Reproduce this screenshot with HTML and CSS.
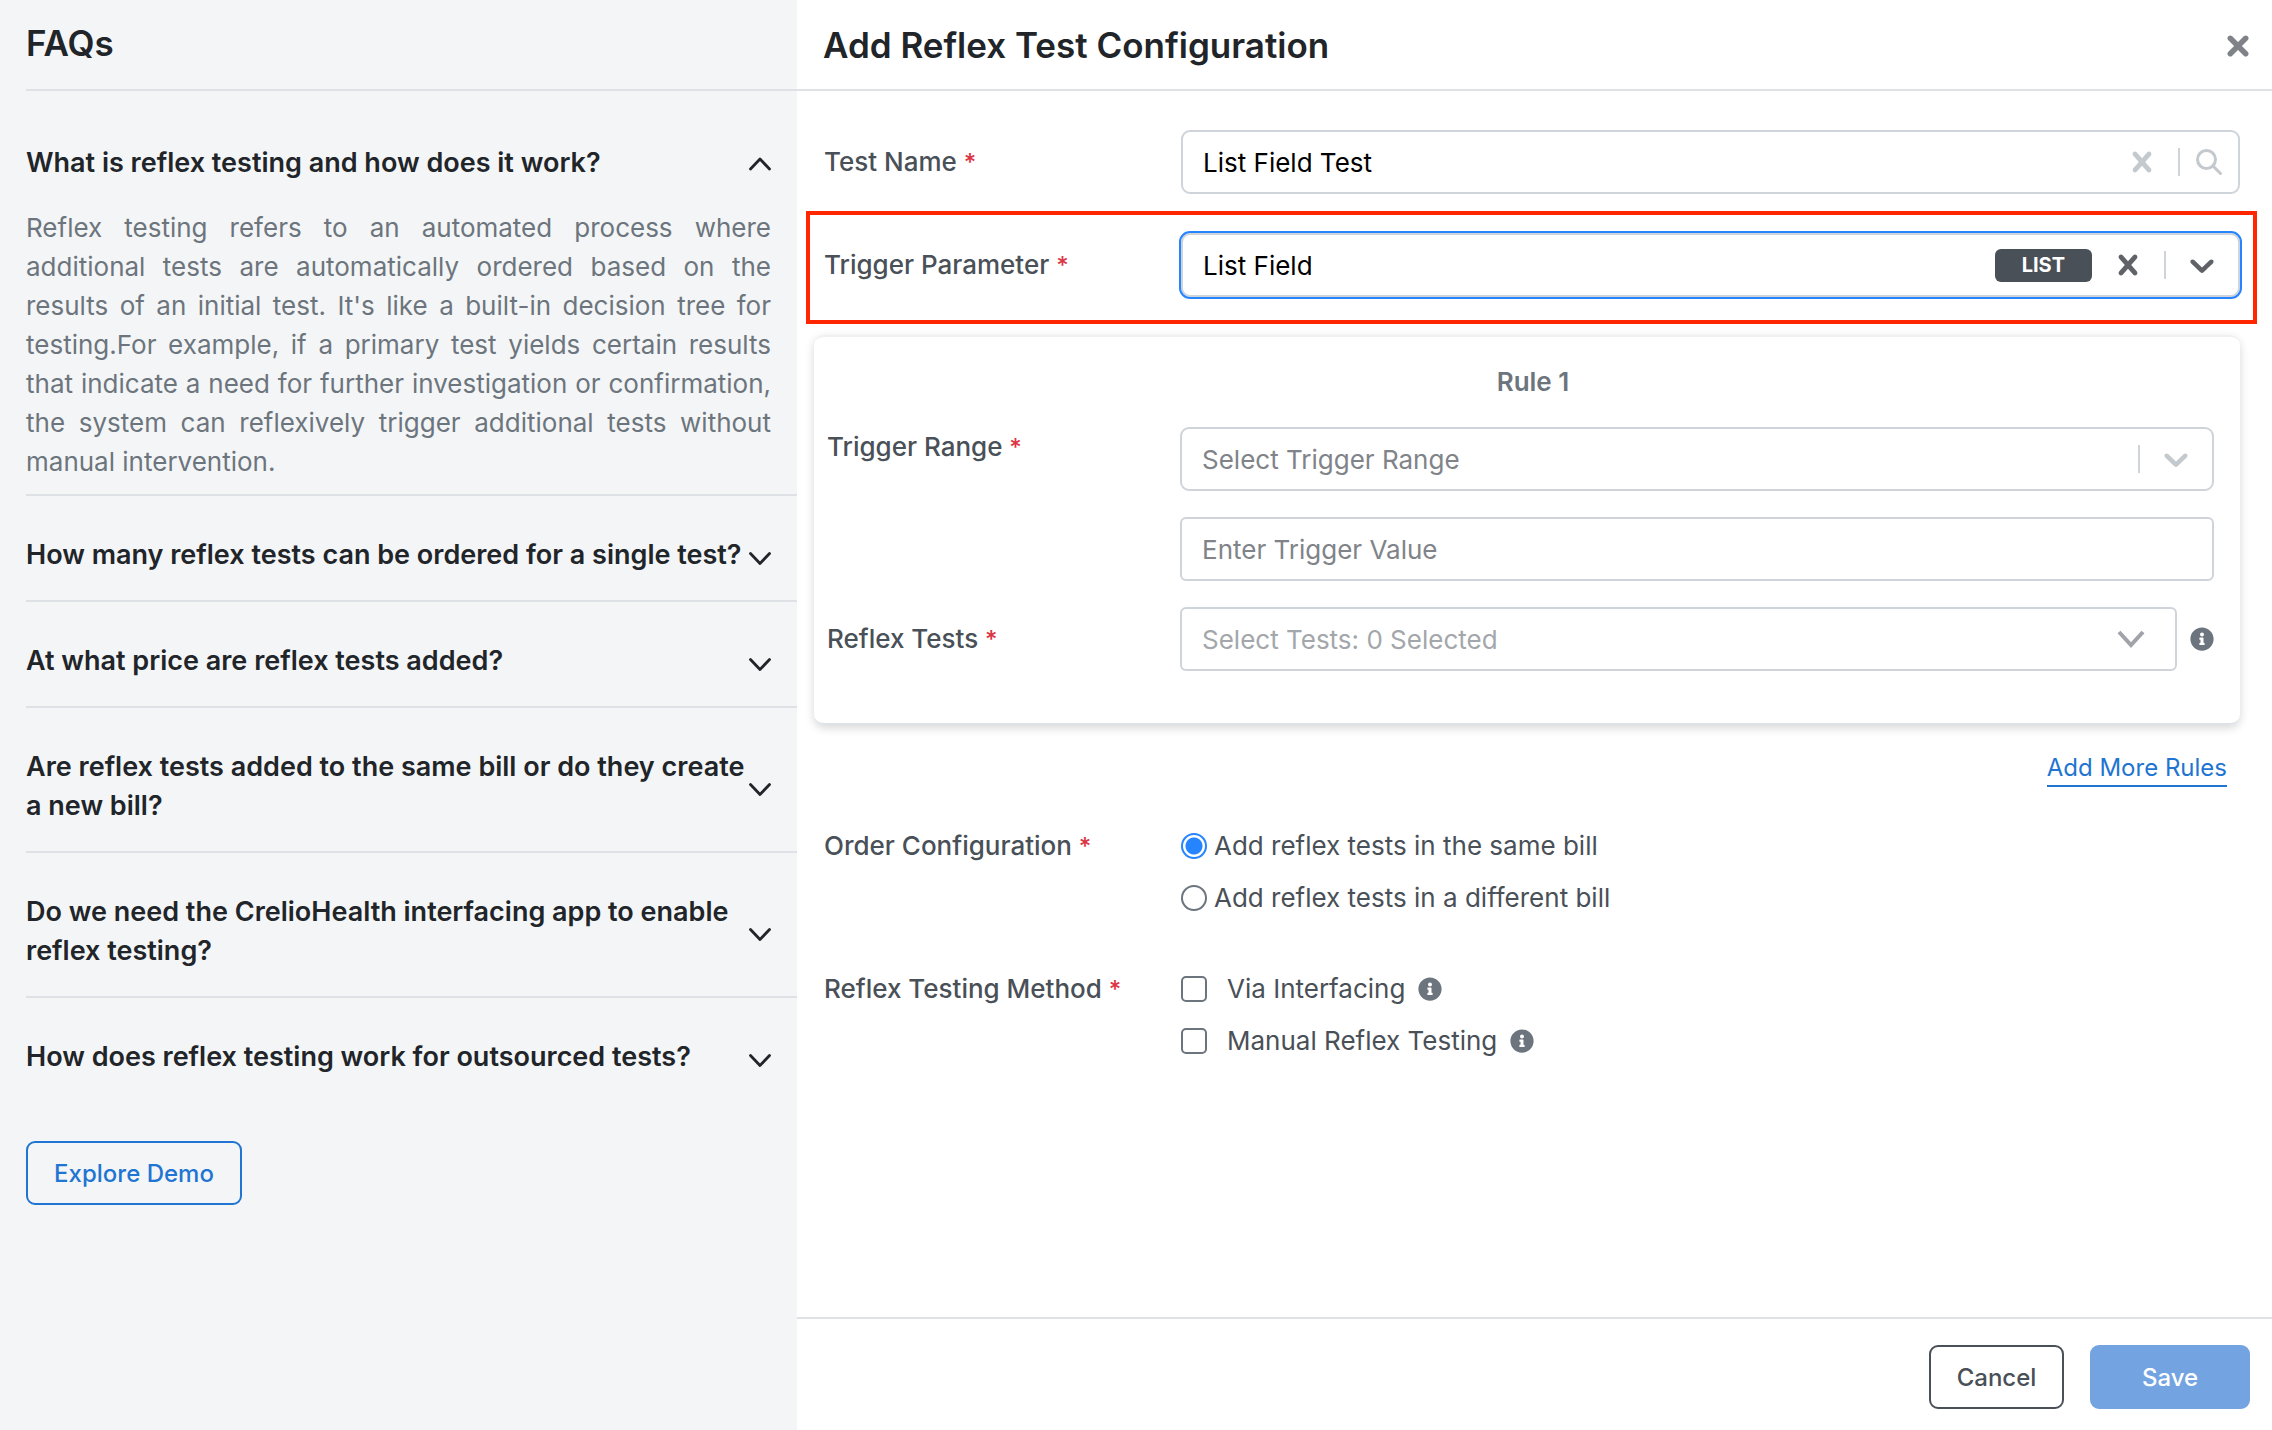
FILE: index.html
```html
<!DOCTYPE html>
<html lang="en">
<head>
<meta charset="utf-8">
<meta name="viewport" content="width=device-width, initial-scale=1">
<title>Add Reflex Test Configuration</title>
<link rel="stylesheet" href="styles.css">
</head>
<body>
<svg class="sprite" aria-hidden="true">
  <symbol id="chevron" viewBox="0 0 20 20"><path d="M4.516 7.548c0.436-0.446 1.043-0.481 1.576 0l3.908 3.747 3.908-3.747c0.533-0.481 1.141-0.446 1.574 0 0.436 0.445 0.408 1.197 0 1.615-0.406 0.418-4.695 4.502-4.695 4.502-0.217 0.223-0.502 0.335-0.787 0.335s-0.57-0.112-0.789-0.335c0 0-4.287-4.084-4.695-4.502s-0.436-1.17 0-1.615z"/></symbol>
  <symbol id="cross" viewBox="0 0 20 20"><path d="M14.348 14.849c-0.469 0.469-1.229 0.469-1.697 0l-2.651-3.030-2.651 3.029c-0.469 0.469-1.229 0.469-1.697 0-0.469-0.469-0.469-1.229 0-1.697l2.758-3.15-2.759-3.152c-0.469-0.469-0.469-1.228 0-1.697s1.228-0.469 1.697 0l2.652 3.031 2.651-3.031c0.469-0.469 1.228-0.469 1.697 0s0.469 1.229 0 1.697l-2.758 3.152 2.758 3.15c0.469 0.469 0.469 1.229 0 1.698z"/></symbol>
  <symbol id="angle-down" viewBox="0 0 22 22"><path d="M1.500 9.500 11 19.500 20.500 9.500" fill="none" stroke="currentColor" stroke-width="2.800" stroke-linecap="round" stroke-linejoin="round"/></symbol>
  <symbol id="angle-up" viewBox="0 0 22 22"><path d="M1.500 17 11 7 20.500 17" fill="none" stroke="currentColor" stroke-width="2.800" stroke-linecap="round" stroke-linejoin="round"/></symbol>
  <symbol id="info" viewBox="0 0 512 512"><path d="M256 8C119 8 8 119 8 256s111 248 248 248 248-111 248-248S393 8 256 8zm0 110c23 0 42 19 42 42s-19 42-42 42-42-19-42-42 19-42 42-42zm56 254c0 7-5 12-12 12h-88c-7 0-12-5-12-12v-24c0-7 5-12 12-12h12v-64h-12c-7 0-12-5-12-12v-24c0-7 5-12 12-12h64c7 0 12 5 12 12v100h12c7 0 12 5 12 12v24z"/></symbol>
</svg>
<div class="layout">
  <aside class="faq">
    <h2 class="faq-title">FAQs</h2>
    <div class="faq-item faq-item-open">
      <button class="question" type="button" aria-expanded="true"><span>What is reflex testing and how does it work?</span><svg class="angle"><use href="#angle-up"/></svg></button>
      <p class="answer">Reflex testing refers to an automated process where additional tests are automatically ordered based on the results of an initial test. It's like a built-in decision tree for testing.For example, if a primary test yields certain results that indicate a need for further investigation or confirmation, the system can reflexively trigger additional tests without manual intervention.</p>
    </div>
    <div class="faq-item"><button class="question" type="button"><span>How many reflex tests can be ordered for a single test?</span><svg class="angle"><use href="#angle-down"/></svg></button></div>
    <div class="faq-item"><button class="question" type="button"><span>At what price are reflex tests added?</span><svg class="angle"><use href="#angle-down"/></svg></button></div>
    <div class="faq-item"><button class="question" type="button"><span>Are reflex tests added to the same bill or do they create a new bill?</span><svg class="angle"><use href="#angle-down"/></svg></button></div>
    <div class="faq-item"><button class="question" type="button"><span>Do we need the CrelioHealth interfacing app to enable reflex testing?</span><svg class="angle"><use href="#angle-down"/></svg></button></div>
    <div class="faq-item"><button class="question" type="button"><span>How does reflex testing work for outsourced tests?</span><svg class="angle"><use href="#angle-down"/></svg></button></div>
    <button class="btn btn-demo" type="button">Explore Demo</button>
  </aside>

  <form class="config">
    <header class="config-header">
      <h1 class="config-title">Add Reflex Test Configuration</h1>
      <button class="icon-btn close" type="button" aria-label="Close"><svg viewBox="0 0 20 20"><path d="M3 3 17 17M17 3 3 17" fill="none" stroke="currentColor" stroke-width="5" stroke-linecap="round"/></svg></button>
    </header>

    <div class="config-body">
      <div class="row">
        <label class="label" for="test-name">Test Name <span class="required">*</span></label>
        <div class="control">
          <input id="test-name" class="field" type="text" value="List Field Test">
          <button class="icon-btn muted" type="button" aria-label="Clear test name"><svg class="glyph"><use href="#cross"/></svg></button>
          <span class="separator"></span>
          <button class="icon-btn muted search" type="button" aria-label="Search"><svg viewBox="0 0 26 26"><circle cx="10.500" cy="10.500" r="9" fill="none" stroke="currentColor" stroke-width="3"/><path d="M17 17 24.500 24.500" fill="none" stroke="currentColor" stroke-width="3" stroke-linecap="round"/></svg></button>
        </div>
      </div>

      <div class="row highlighted">
        <label class="label" for="trigger-parameter">Trigger Parameter <span class="required">*</span></label>
        <div class="control focused">
          <select id="trigger-parameter" class="field"><option>List Field</option></select>
          <span class="badge">LIST</span>
          <button class="icon-btn strong" type="button" aria-label="Clear trigger parameter"><svg class="glyph"><use href="#cross"/></svg></button>
          <span class="separator"></span>
          <svg class="glyph strong"><use href="#chevron"/></svg>
        </div>
      </div>

      <section class="card">
        <h3 class="card-title">Rule 1</h3>
        <div class="row row-top">
          <label class="label" for="trigger-range">Trigger Range <span class="required">*</span></label>
          <div class="stack">
            <div class="control">
              <select id="trigger-range" class="field placeholder"><option>Select Trigger Range</option></select>
              <span class="separator"></span>
              <svg class="glyph muted"><use href="#chevron"/></svg>
            </div>
            <div class="control plain">
              <input class="field" type="text" placeholder="Enter Trigger Value" aria-label="Trigger value">
            </div>
          </div>
        </div>
        <div class="row">
          <label class="label" for="reflex-tests">Reflex Tests <span class="required">*</span></label>
          <div class="with-info">
            <div class="control plain tests">
              <select id="reflex-tests" class="field disabled"><option>Select Tests: 0 Selected</option></select>
              <svg class="tests-arrow" viewBox="0 0 28 20"><path d="M2 3 14 16 26 3" fill="none" stroke="currentColor" stroke-width="4"/></svg>
            </div>
            <svg class="info"><use href="#info"/></svg>
          </div>
        </div>
      </section>

      <a class="add-rules" href="#">Add More Rules</a>

      <div class="row choices" role="group" aria-labelledby="order-label">
        <span class="label" id="order-label">Order Configuration <span class="required">*</span></span>
        <div class="options">
          <label class="radio"><input type="radio" name="order" checked>Add reflex tests in the same bill</label>
          <label class="radio"><input type="radio" name="order">Add reflex tests in a different bill</label>
        </div>
      </div>

      <div class="row choices" role="group" aria-labelledby="method-label">
        <span class="label" id="method-label">Reflex Testing Method <span class="required">*</span></span>
        <div class="options">
          <label class="check"><input type="checkbox">Via Interfacing<svg class="info"><use href="#info"/></svg></label>
          <label class="check"><input type="checkbox">Manual Reflex Testing<svg class="info"><use href="#info"/></svg></label>
        </div>
      </div>
    </div>

    <footer class="config-footer">
      <button class="btn btn-cancel" type="button">Cancel</button>
      <button class="btn btn-save" type="submit">Save</button>
    </footer>
  </form>
</div>
</body>
</html>
```

FILE: styles.css
```css
* { box-sizing: border-box; }

body {
  margin: 0;
  font: 400 26px/39px Inter, "Liberation Sans", sans-serif;
  color: #495057;
  background: #fff;
}

button, input, select {
  font: inherit;
  color: inherit;
}

h1, h2, h3, p { margin: 0; }

svg { flex: none; fill: currentColor; }

.sprite { position: absolute; width: 0; height: 0; }

.layout {
  display: grid;
  grid-template-columns: 797px minmax(0, 1fr);
  min-height: 100vh;
}

/* FAQ panel */
.faq {
  padding-left: 26px;
  background: #f4f5f7;
  color: #212529;
}

.faq-title {
  height: 91px;
  padding-top: 21px;
  border-bottom: 2px solid #dee2e6;
  font-size: 35px;
  line-height: 44px;
  font-weight: 600;
}

.faq-item {
  padding: 39px 26px 26px 0;
  border-bottom: 2px solid #dee2e6;
}

.faq-item-open { padding: 52px 26px 13px 0; }
.faq-item:last-of-type { border-bottom: 0; }

.question {
  display: flex;
  align-items: center;
  justify-content: space-between;
  width: 100%;
  padding: 0;
  border: 0;
  background: none;
  font-size: 27px;
  font-weight: 600;
  text-align: left;
}

.angle { width: 22px; height: 22px; }

.answer {
  padding-top: 26px;
  color: #6c757d;
  text-align: justify;
}

.btn {
  height: 64px;
  border: 2px solid;
  border-radius: 9px;
  background: none;
  font-size: 24px;
  font-weight: 500;
}

.btn-demo {
  width: 216px;
  padding: 0;
  margin-top: 39px;
  color: #1f75d1;
}

/* Configuration panel */
.config {
  display: flex;
  flex-direction: column;
}

.config-header {
  display: flex;
  align-items: center;
  justify-content: space-between;
  height: 91px;
  padding: 0 23px 0 26px;
  border-bottom: 2px solid #dee2e6;
}

.config-title {
  font-size: 35px;
  line-height: 44px;
  font-weight: 600;
  color: #212529;
}

.config-body {
  flex: 1;
  padding: 39px 32px 39px 17px;
}

.icon-btn {
  display: flex;
  padding: 0;
  border: 0;
  background: none;
}

.close { padding-top: 3px; color: #7f8387; }
.close svg { width: 22px; height: 22px; }

.row {
  display: grid;
  grid-template-columns: 357px minmax(0, 1fr);
  align-items: center;
  padding-left: 10px;
}

.row-top { align-items: start; }

.label { font-weight: 500; }
.required { color: #dc3545; font-size: 24px; }

.control {
  display: flex;
  align-items: center;
  height: 64px;
  padding-right: 16px;
  border: 2px solid #ced4da;
  border-radius: 9px;
  background: #fff;
}

.plain { border-radius: 6px; }

.focused { outline: 2px solid #2684ff; }

.field {
  flex: 1;
  min-width: 0;
  height: 100%;
  padding: 0 20px;
  border: 0;
  outline: 0;
  background: none;
  color: #000;
  appearance: none;
}

.field::placeholder { color: #808489; opacity: 1; }
.placeholder { color: #808489; }
.disabled { color: #a3a7ab; }

.glyph { width: 40px; height: 40px; }
.muted { color: #c4c9ce; }
.strong { color: #5f6368; }

.separator {
  width: 2px;
  height: 28px;
  margin: 0 16px;
  background: #ced4da;
}

.search svg { width: 26px; height: 26px; }

.badge {
  margin-right: 16px;
  padding: 0 27px;
  border-radius: 6px;
  background: #495057;
  color: #fff;
  font-size: 20px;
  line-height: 33px;
  font-weight: 700;
}

.highlighted {
  margin: 17px -17px 11px -8px;
  padding: 18px 13px 23px 14px;
  border: 4px solid #ff2600;
}

.card {
  display: grid;
  gap: 26px;
  padding: 25px 26px 52px 3px;
  border-top: 2px solid #f0f0f1;
  border-bottom: 2px solid #dee2e6;
  border-radius: 10px;
  box-shadow: 0 3px 10px rgba(0, 0, 0, .16);
}

.card .row { grid-template-columns: 353px minmax(0, 1fr); }

.card-title {
  padding-left: 35px;
  font-size: 26px;
  line-height: 39px;
  font-weight: 600;
  color: #6c757d;
  text-align: center;
}

.stack { display: grid; gap: 26px; }

.with-info {
  display: flex;
  align-items: center;
  gap: 13px;
}

.tests { flex: 1; padding-right: 30px; }
.tests-arrow { width: 28px; height: 20px; color: #a0a4a8; }

.info { width: 24px; height: 24px; color: #6c757d; }

.add-rules {
  display: block;
  width: fit-content;
  margin: 26px 13px 39px auto;
  border-bottom: 2px solid #1f75d1;
  color: #1f75d1;
  font-size: 24px;
  line-height: 34px;
  text-decoration: none;
}

.choices { align-items: start; margin-bottom: 52px; }

.options { display: grid; gap: 13px; justify-items: start; }

.radio, .check {
  display: flex;
  align-items: center;
}

.radio { gap: 7px; }
.check { gap: 13px; }

.radio input, .check input {
  width: 26px;
  height: 26px;
  margin: 0;
  border: 2px solid #6c757d;
  border-radius: 5px;
  background: #fff;
  appearance: none;
}

.check input { margin-right: 7px; }
.radio input { border-radius: 50%; }

.radio input:checked {
  border-color: #2684ff;
  background: radial-gradient(circle, #2684ff 8px, #fff 9px);
}

.config-footer {
  display: flex;
  justify-content: flex-end;
  gap: 26px;
  height: 113px;
  padding: 26px 22px;
  border-top: 2px solid #dee2e6;
}

.btn-cancel { width: 135px; padding: 0; color: #495057; }

.btn-save {
  width: 160px;
  border-color: #74a3e1;
  background: #74a3e1;
  color: #fff;
}
```
